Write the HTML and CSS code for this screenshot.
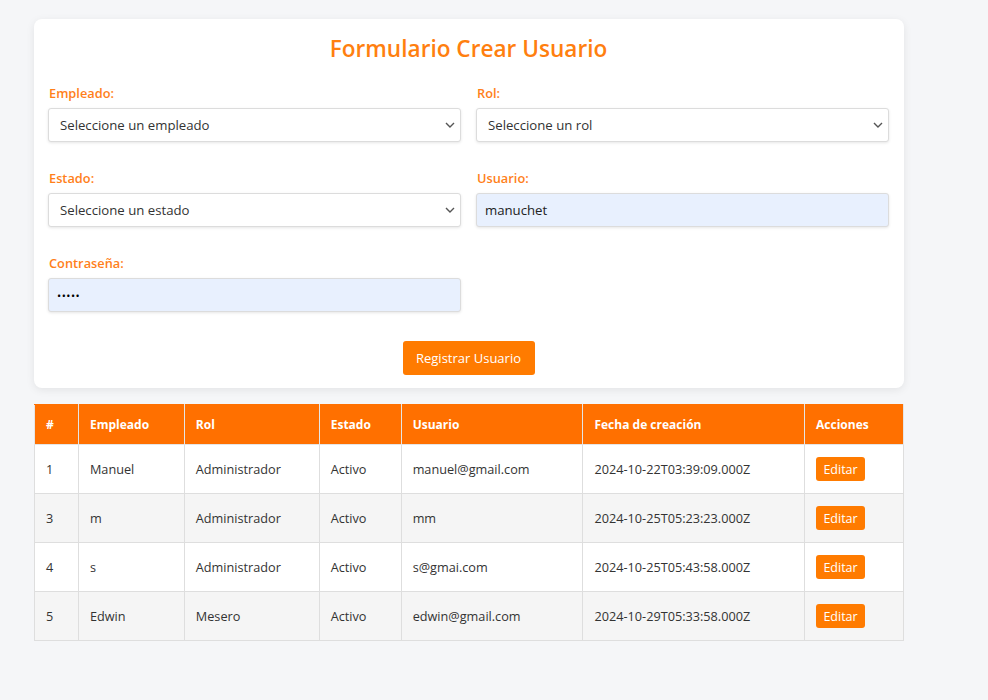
FILE: index.html
```html
<!DOCTYPE html>
<html lang="es">
<head>
<meta charset="utf-8">
<title>Crear Usuario</title>
<link rel="stylesheet" href="styles.css">
</head>
<body>
<main class="wrap">
  <form class="card">
    <h2 class="title">Formulario Crear Usuario</h2>
    <div class="grid">
      <div class="field">
        <label class="label">Empleado:</label>
        <div class="select">Seleccione un empleado<svg class="chev" viewBox="0 0 10 6" width="10" height="6"><path d="M1 1l4 4 4-4" fill="none" stroke="#555" stroke-width="1.4"/></svg></div>
      </div>
      <div class="field">
        <label class="label">Rol:</label>
        <div class="select">Seleccione un rol<svg class="chev" viewBox="0 0 10 6" width="10" height="6"><path d="M1 1l4 4 4-4" fill="none" stroke="#555" stroke-width="1.4"/></svg></div>
      </div>
      <div class="field">
        <label class="label">Estado:</label>
        <div class="select">Seleccione un estado<svg class="chev" viewBox="0 0 10 6" width="10" height="6"><path d="M1 1l4 4 4-4" fill="none" stroke="#555" stroke-width="1.4"/></svg></div>
      </div>
      <div class="field">
        <label class="label">Usuario:</label>
        <div class="input filled">manuchet</div>
      </div>
      <div class="field">
        <label class="label">Contraseña:</label>
        <div class="input filled dots">•••••</div>
      </div>
    </div>
    <div class="actions"><button type="button" class="btn">Registrar Usuario</button></div>
  </form>

  <table class="table">
    <thead>
      <tr><th class="c1">#</th><th class="c2">Empleado</th><th class="c3">Rol</th><th class="c4">Estado</th><th class="c5">Usuario</th><th class="c6">Fecha de creación</th><th class="c7">Acciones</th></tr>
    </thead>
    <tbody>
      <tr><td>1</td><td>Manuel</td><td>Administrador</td><td>Activo</td><td>manuel@gmail.com</td><td>2024-10-22T03:39:09.000Z</td><td><button type="button" class="edit">Editar</button></td></tr>
      <tr><td>3</td><td>m</td><td>Administrador</td><td>Activo</td><td>mm</td><td>2024-10-25T05:23:23.000Z</td><td><button type="button" class="edit">Editar</button></td></tr>
      <tr><td>4</td><td>s</td><td>Administrador</td><td>Activo</td><td>s@gmai.com</td><td>2024-10-25T05:43:58.000Z</td><td><button type="button" class="edit">Editar</button></td></tr>
      <tr><td>5</td><td>Edwin</td><td>Mesero</td><td>Activo</td><td>edwin@gmail.com</td><td>2024-10-29T05:33:58.000Z</td><td><button type="button" class="edit">Editar</button></td></tr>
    </tbody>
  </table>
</main>
</body>
</html>
```

FILE: styles.css
```css
* { box-sizing: border-box; }
html, body { margin: 0; }
body {
  background: #f5f6f8;
  font-family: "Open Sans", "DejaVu Sans", sans-serif;
  color: #333;
}
.wrap {
  width: 870px;
  margin-left: 34px;
  padding-top: 19px;
}
.card {
  background: #fff;
  border-radius: 8px;
  box-shadow: 0 2px 8px rgba(0,0,0,0.08);
  padding: 15px 15px 13px 14px;
  margin: 0 0 16px;
}
.title {
  margin: 0 0 20px;
  text-align: center;
  font-size: 22.6px;
  line-height: 30px;
  font-weight: 600;
  color: #ff7f0f;
}
.grid {
  display: grid;
  grid-template-columns: 1fr 1fr;
  column-gap: 15px;
  row-gap: 27px;
}
.field { display: flex; flex-direction: column; }
.label {
  font-size: 12.8px;
  line-height: 18px;
  font-weight: 600;
  color: #ff7f1a;
  margin-left: 1px;
  margin-bottom: 6px;
}
.select, .input {
  height: 34px;
  border: 1px solid #dcdcdc;
  border-radius: 3px;
  box-shadow: 0 1px 3px rgba(0,0,0,0.1);
  font-size: 13.2px;
  display: flex;
  align-items: center;
  color: #333;
}
.select {
  background: #fff;
  padding: 0 5px 0 11px;
  justify-content: space-between;
}
.chev { flex: none; }
.input { padding: 0 8px; }
.filled { background: #e8f0fe; color: #222; }
.dots { font-size: 11px; letter-spacing: 0.5px; color: #000; }
.actions {
  display: flex;
  justify-content: center;
  margin-top: 29px;
}
.btn {
  width: 132px;
  height: 34px;
  border: 0;
  border-radius: 3px;
  background: #ff7b00;
  color: #fff;
  font-family: inherit;
  font-size: 13px;
}
.table {
  width: 870px;
  border-collapse: collapse;
  font-size: 12.7px;
}
.table th, .table td {
  border: 1px solid #dedede;
  text-align: left;
  padding: 0 11px;
}
.table th {
  background: #ff7000;
  color: #fff;
  font-weight: 700;
  font-size: 12px;
  height: 40px;
  border-color: #e5e5e5;
  border-top-color: #ff7000;
}
.table td {
  height: 49px;
  color: #333;
  background: #fff;
}
.table tbody tr:nth-child(even) td { background: #f5f5f5; }
.c1 { width: 44px; }
.c2 { width: 106px; }
.c3 { width: 135px; }
.c4 { width: 82px; }
.c5 { width: 182px; }
.c6 { width: 222px; }
.c7 { width: 99px; }
.edit {
  width: 49px;
  height: 24px;
  border: 0;
  border-radius: 3px;
  background: #ff7b00;
  color: #fff;
  font-family: inherit;
  font-size: 12.5px;
  padding: 0;
  display: block;
}
```
